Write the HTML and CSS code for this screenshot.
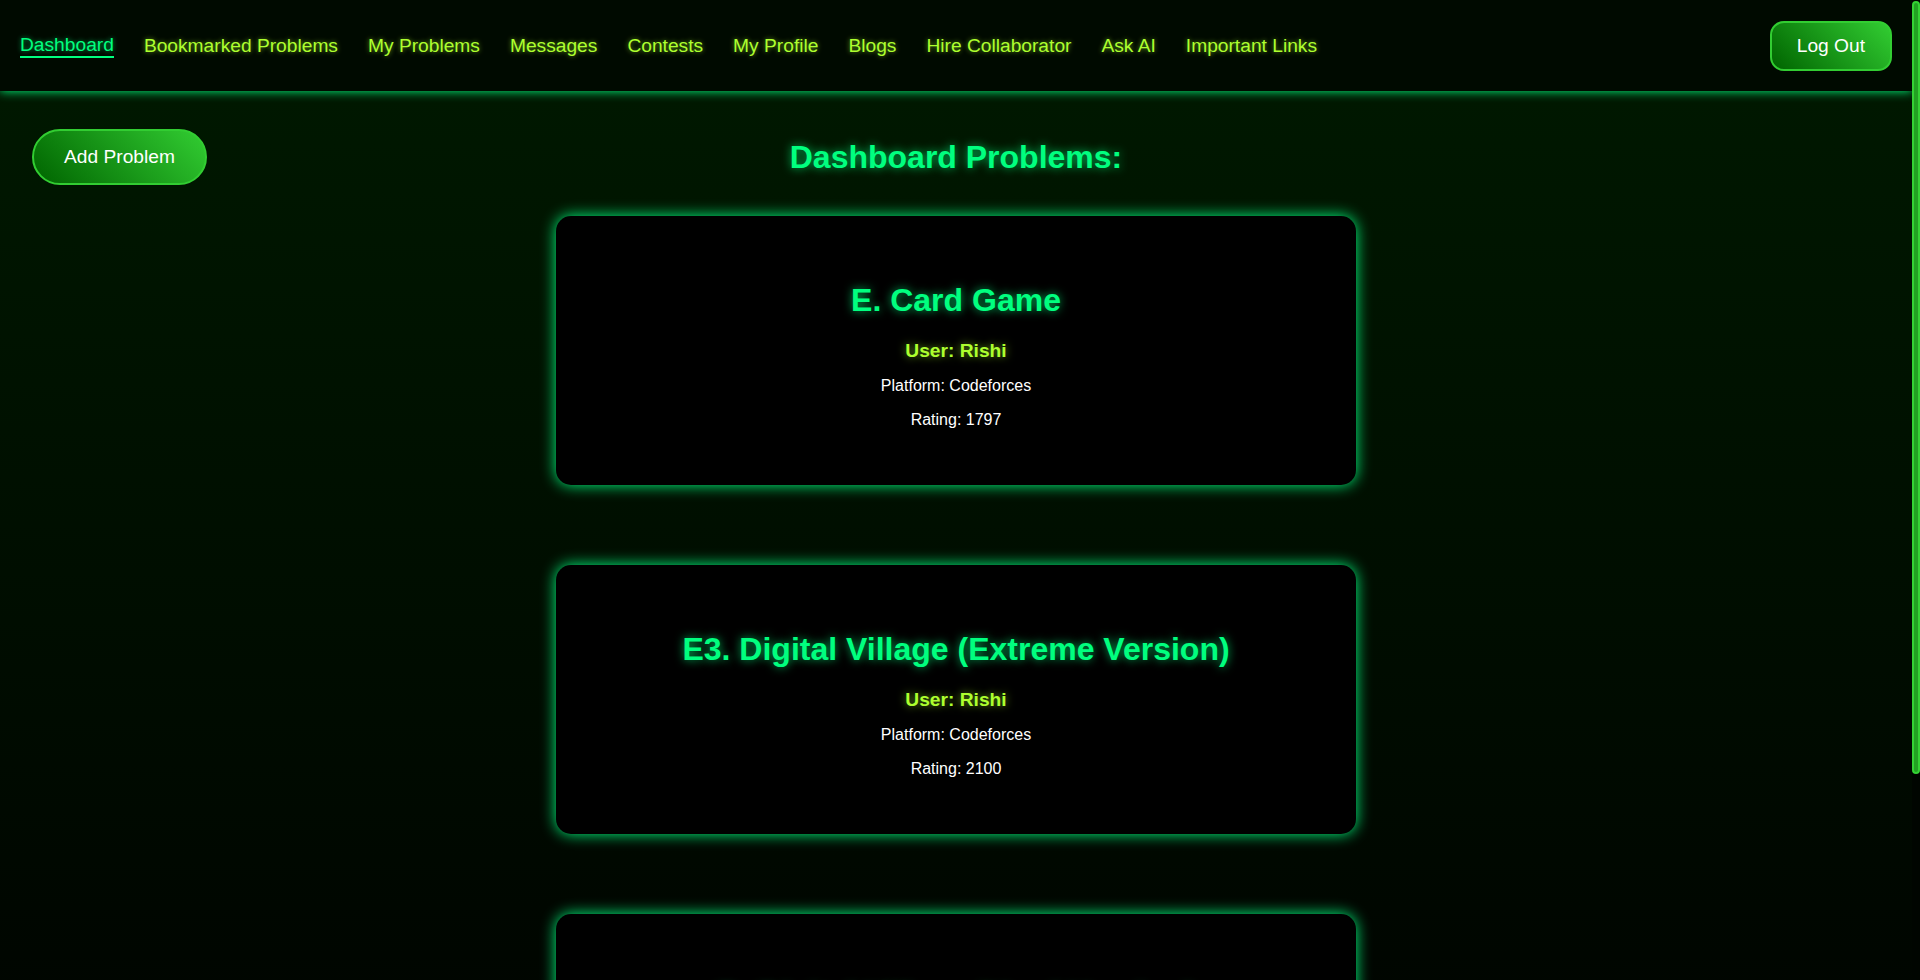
FILE: index.html
```html
<!DOCTYPE html>
<html lang="en">
<head>
<meta charset="utf-8">
<title>Dashboard</title>
<link rel="stylesheet" href="styles.css">
</head>
<body>
<div class="page">
  <header class="topbar">
    <nav class="nav">
      <a class="nav-link active" href="#">Dashboard</a>
      <a class="nav-link" href="#">Bookmarked Problems</a>
      <a class="nav-link" href="#">My Problems</a>
      <a class="nav-link" href="#">Messages</a>
      <a class="nav-link" href="#">Contests</a>
      <a class="nav-link" href="#">My Profile</a>
      <a class="nav-link" href="#">Blogs</a>
      <a class="nav-link" href="#">Hire Collaborator</a>
      <a class="nav-link" href="#">Ask AI</a>
      <a class="nav-link" href="#">Important Links</a>
    </nav>
    <button class="btn logout">Log Out</button>
  </header>
  <main class="main">
    <div class="top-row">
      <div class="left"><button class="btn add">Add Problem</button></div>
      <h1 class="page-title">Dashboard Problems:</h1>
      <div class="right"></div>
    </div>
    <section class="cards">
      <article class="card">
        <h2 class="card-title">E. Card Game</h2>
        <h3 class="card-user">User: Rishi</h3>
        <p class="card-text">Platform: Codeforces</p>
        <p class="card-text">Rating: 1797</p>
      </article>
      <article class="card">
        <h2 class="card-title">E3. Digital Village (Extreme Version)</h2>
        <h3 class="card-user">User: Rishi</h3>
        <p class="card-text">Platform: Codeforces</p>
        <p class="card-text">Rating: 2100</p>
      </article>
      <article class="card">
        <h2 class="card-title">D. Digital Village (Hard Version)</h2>
        <h3 class="card-user">User: Rishi</h3>
        <p class="card-text">Platform: Codeforces</p>
        <p class="card-text">Rating: 2300</p>
      </article>
    </section>
  </main>
</div>
<div class="scrollbar" aria-hidden="true"><div class="scroll-thumb"></div></div>
</body>
</html>
```

FILE: styles.css
```css
html {
  background: #000;
  scrollbar-width: none;
}
::-webkit-scrollbar {
  width: 0;
  height: 0;
}
body {
  margin: 0;
  font-family: "Liberation Sans", Arial, sans-serif;
  color: #fff;
  background: #000;
}
.page {
  margin-right: 8px;
  min-height: 100vh;
  background: linear-gradient(180deg, #001a00 0%, #000000 100%);
  overflow: hidden;
}
.scrollbar {
  position: fixed;
  top: 0;
  right: 0;
  width: 8px;
  height: 100vh;
  background: #000500;
  z-index: 5;
}
.scroll-thumb {
  margin-top: 1px;
  height: 773px;
  box-sizing: border-box;
  background: #23a123;
  border: 2px solid #34d234;
  border-radius: 4px;
}
.topbar {
  height: 91px;
  box-sizing: border-box;
  padding: 0 20px;
  display: flex;
  align-items: center;
  justify-content: space-between;
  background: #000a00;
  box-shadow: 0 0 10px #00ff7f;
  position: relative;
  z-index: 1;
}
.nav {
  display: flex;
  align-items: center;
  gap: 30px;
}
.nav-link {
  font-size: 19.2px;
  color: #adff2f;
  text-decoration: none;
  text-shadow: 0 0 5px rgba(173, 255, 47, 0.6);
}
.nav-link.active {
  color: #00ff7f;
  border-bottom: 2px solid #00ff7f;
  text-shadow: 0 0 5px rgba(0, 255, 127, 0.6);
}
.btn {
  font-family: "Liberation Sans", Arial, sans-serif;
  font-size: 19.2px;
  color: #fff;
  background: linear-gradient(45deg, #006400, #32cd32);
  border: 2px solid #32cd32;
  cursor: pointer;
  line-height: 22px;
}
.logout {
  padding: 12px 25px;
  border-radius: 14px;
}
.add {
  padding: 15px 30px;
  border-radius: 30px;
}
.main {
  padding: 38px 32px 58px;
}
.top-row {
  display: grid;
  grid-template-columns: 1fr auto 1fr;
  align-items: center;
}
.page-title {
  margin: 0;
  font-size: 32px;
  font-weight: bold;
  color: #00ff7f;
  text-shadow: 0 0 10px rgba(0, 255, 127, 0.7);
  text-align: center;
}
.cards {
  margin-top: 31px;
  display: flex;
  flex-direction: column;
  align-items: center;
  gap: 80px;
}
.card {
  width: 800px;
  box-sizing: border-box;
  padding: 40px 20px;
  background: #000;
  border-radius: 15px;
  box-shadow: 0 0 15px #00ff7f;
  text-align: center;
}
.card-title {
  margin: 26px 0 21px;
  font-size: 32px;
  font-weight: bold;
  color: #00ff7f;
  text-shadow: 0 0 10px rgba(0, 255, 127, 0.7);
}
.card-user {
  margin: 0 0 15px;
  font-size: 19.2px;
  font-weight: bold;
  color: #adff2f;
  text-shadow: 0 0 8px rgba(173, 255, 47, 0.6);
}
.card-text {
  margin: 0 0 16px;
  font-size: 16px;
  color: #fff;
}
```
